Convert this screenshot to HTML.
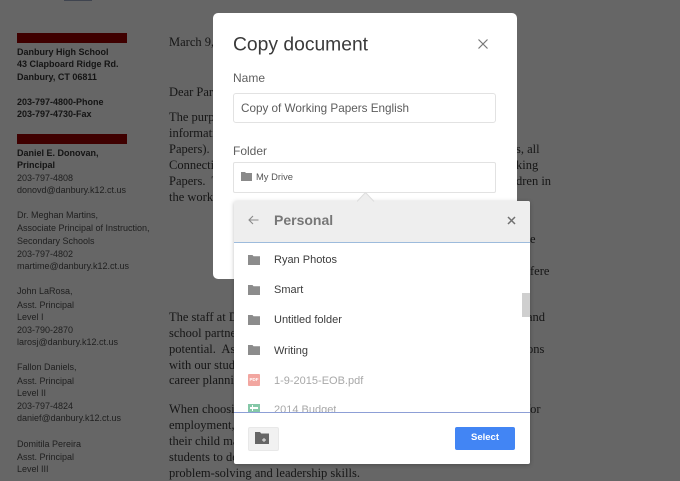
<!DOCTYPE html>
<html><head><meta charset="utf-8">
<style>
html,body{margin:0;padding:0}
body{width:680px;height:478px;overflow:hidden;position:relative;background:#666;font-family:"Liberation Sans",sans-serif}
.a{position:absolute;white-space:nowrap}
.l{position:absolute;left:17px;font-size:9px;line-height:12px;color:#202020;white-space:nowrap;filter:blur(.3px)}
.b{font-weight:bold;color:#141414}
.s{position:absolute;left:169px;font-family:"Liberation Serif",serif;font-size:12.5px;line-height:16px;color:#161616;white-space:nowrap;filter:blur(.3px)}
.bar{position:absolute;left:17px;width:110px;height:10px;background:#3f0000}
.row{position:absolute;left:274px;font-size:11px;line-height:14px;color:#3c3c3c;white-space:nowrap}
svg{position:absolute;display:block}
</style></head><body>
<div class="a" style="left:64px;top:0;width:28px;height:1px;background:#3f444f"></div>
<div class="bar" style="top:33px"></div>
<div class="bar" style="top:134px"></div>
<div class="l b" style="top:46px">Danbury High School</div>
<div class="l b" style="top:58px">43 Clapboard Ridge Rd.</div>
<div class="l b" style="top:71px">Danbury, CT 06811</div>
<div class="l b" style="top:96px">203-797-4800-Phone</div>
<div class="l b" style="top:108px">203-797-4730-Fax</div>
<div class="l b" style="top:147px">Daniel E. Donovan,</div>
<div class="l b" style="top:159px">Principal</div>
<div class="l" style="top:172px">203-797-4808</div>
<div class="l" style="top:184px">donovd@danbury.k12.ct.us</div>
<div class="l" style="top:209px">Dr. Meghan Martins,</div>
<div class="l" style="top:222px">Associate Principal of Instruction,</div>
<div class="l" style="top:235px">Secondary Schools</div>
<div class="l" style="top:248px">203-797-4802</div>
<div class="l" style="top:260px">martime@danbury.k12.ct.us</div>
<div class="l" style="top:285px">John LaRosa,</div>
<div class="l" style="top:299px">Asst. Principal</div>
<div class="l" style="top:311px">Level I</div>
<div class="l" style="top:324px">203-790-2870</div>
<div class="l" style="top:336px">larosj@danbury.k12.ct.us</div>
<div class="l" style="top:361px">Fallon Daniels,</div>
<div class="l" style="top:375px">Asst. Principal</div>
<div class="l" style="top:387px">Level II</div>
<div class="l" style="top:400px">203-797-4824</div>
<div class="l" style="top:412px">danief@danbury.k12.ct.us</div>
<div class="l" style="top:438px">Domitila Pereira</div>
<div class="l" style="top:451px">Asst. Principal</div>
<div class="l" style="top:463px">Level III</div>

<div class="s" style="top:34px">March 9, 2015</div>
<div class="s" style="top:84px">Dear Parents</div>
<div class="s" style="top:109px">The purpose</div>
<div class="s" style="top:125px">information</div>
<div class="s" style="top:141px">Papers).</div>
<div class="s" style="top:157px">Connecticut</div>
<div class="s" style="top:173px">Papers.&nbsp; The</div>
<div class="s" style="top:189px">the workplace</div>
<div class="s" style="top:309px">The staff at Danbury</div>
<div class="s" style="top:325px">school partners</div>
<div class="s" style="top:341px">potential.&nbsp; As</div>
<div class="s" style="top:357px">with our students</div>
<div class="s" style="top:372px">career planning</div>
<div class="s" style="top:401px">When choosing</div>
<div class="s" style="top:417px">employment,</div>
<div class="s" style="top:433px">their child may</div>
<div class="s" style="top:449px">students to develop</div>
<div class="s" style="top:465px">problem-solving and leadership skills.</div>
<div class="s" style="left:516px;top:141px">s, all</div>
<div class="s" style="left:516px;top:157px">king</div>
<div class="s" style="left:516px;top:173px">dren in</div>
<div class="s" style="left:530px;top:231px">e</div>
<div class="s" style="left:530px;top:263px">fere</div>
<div class="s" style="left:527px;top:309px">and</div>
<div class="s" style="left:527px;top:341px">ons</div>
<div class="s" style="left:526px;top:401px">for</div>

<!-- Copy dialog -->
<div class="a" style="left:213px;top:13px;width:304px;height:266px;background:#fff;border-radius:5px"></div>
<div class="a" style="left:233px;top:34px;font-size:19.300px;line-height:22px;color:#3a3a3a;transform:translateY(.6px)">Copy document</div>
<svg style="left:478px;top:39px" width="10" height="10" viewBox="0 0 10 10"><path d="M.5.5l9 9M9.500.5l-9 9" stroke="#777" stroke-width="1.200" fill="none"/></svg>
<div class="a" style="left:233px;top:71px;font-size:12px;line-height:14px;color:#5f5f5f">Name</div>
<div class="a" style="left:233px;top:93px;width:261px;height:28px;border:1px solid #e2e2e2;border-radius:3px;background:#fff"></div>
<div class="a" style="left:241px;top:102px;font-size:11.700px;line-height:14px;color:#5c5c5c">Copy of Working Papers English</div>
<div class="a" style="left:233px;top:144px;font-size:12px;line-height:14px;color:#5f5f5f">Folder</div>
<div class="a" style="left:233px;top:162px;width:261px;height:29px;border:1px solid #e2e2e2;border-radius:2px;background:#fff"></div>
<svg style="left:241px;top:172px" width="11" height="9" viewBox="0 0 11 9"><path d="M0 0h4l1 1h6v8H0z" fill="#8a8a8a"/></svg>
<div class="a" style="left:256px;top:171px;font-size:9.400px;line-height:11px;color:#555">My Drive</div>

<!-- Picker -->
<svg style="left:357px;top:192px;z-index:3" width="18" height="10" viewBox="0 0 18 10"><path d="M0 9.500L8.500.5 17 9.500z" fill="#eee"/><path d="M0 9.500L8.500.5 17 9.500" fill="none" stroke="#ddd"/></svg>
<div class="a" style="left:234px;top:201px;width:296px;height:263px;background:#fff;border-radius:2px;box-shadow:0 1px 4px rgba(0,0,0,.25);overflow:hidden">
  <div class="a" style="left:0;top:0;width:296px;height:41px;background:#eee;border-bottom:1px solid #9dbbdc"></div>
  <div class="a" style="left:0;top:211px;width:296px;height:1px;background:#8d9fd6"></div>
  <div class="a" style="left:288px;top:92px;width:8px;height:24px;background:#cfcfcf"></div>
</div>
<svg style="left:248px;top:215px" width="11" height="10" viewBox="0 0 11 10"><path d="M10.500 5H1.200M5 1L1 5l4 4" stroke="#8a8a8a" stroke-width="1.100" fill="none"/></svg>
<div class="a" style="left:274px;top:212px;font-size:14px;line-height:16px;font-weight:bold;color:#777">Personal</div>
<svg style="left:507px;top:216px" width="9" height="9" viewBox="0 0 9 9"><path d="M1 1l7 7M8 1L1 8" stroke="#707070" stroke-width="1.500" fill="none"/></svg>

<svg style="left:248px;top:255px" width="12" height="10" viewBox="0 0 12 10"><path d="M0 0h4.500l1 1.200H12V10H0z" fill="#8c8c8c"/></svg>
<svg style="left:248px;top:285px" width="12" height="10" viewBox="0 0 12 10"><path d="M0 0h4.500l1 1.200H12V10H0z" fill="#8c8c8c"/></svg>
<svg style="left:248px;top:315px" width="12" height="10" viewBox="0 0 12 10"><path d="M0 0h4.500l1 1.200H12V10H0z" fill="#8c8c8c"/></svg>
<svg style="left:248px;top:345px" width="12" height="10" viewBox="0 0 12 10"><path d="M0 0h4.500l1 1.200H12V10H0z" fill="#8c8c8c"/></svg>
<div class="row" style="top:253px">Ryan Photos</div>
<div class="row" style="top:283px">Smart</div>
<div class="row" style="top:313px">Untitled folder</div>
<div class="row" style="top:344px">Writing</div>
<div class="a" style="left:248px;top:374px;width:12px;height:12px;background:#f2a6a0;border-radius:1px;color:#fff;font-size:4.500px;line-height:12px;font-weight:bold;text-align:center">PDF</div>
<div class="row" style="top:374px;color:#a8a8a8">1-9-2015-EOB.pdf</div>
<div class="a" style="left:248px;top:404px;width:12px;height:8px;background:#85c8a8;overflow:hidden"><div class="a" style="left:2px;top:3px;width:8px;height:2px;background:#fff"></div><div class="a" style="left:4px;top:1px;width:1px;height:6px;background:#fff"></div></div>
<div class="row" style="top:403px;height:9px;overflow:hidden;color:#a8a8a8">2014 Budget</div>

<div class="a" style="left:248px;top:427px;width:29px;height:22px;background:#f1f1f1;border:1px solid #e8e8e8;border-radius:2px"></div>
<svg style="left:255px;top:432px" width="14" height="12" viewBox="0 0 14 12"><path d="M0 0h5l1.200 1.500H14V12H0z" fill="#666"/><path d="M9 6v4M7 8h4" stroke="#eee" stroke-width=".9"/></svg>
<div class="a" style="left:455px;top:427px;width:60px;height:23px;background:#4285f4;border-radius:2px;color:#fff;font-size:9.500px;line-height:22px;font-weight:bold;text-align:center">Select</div>
</body></html>
